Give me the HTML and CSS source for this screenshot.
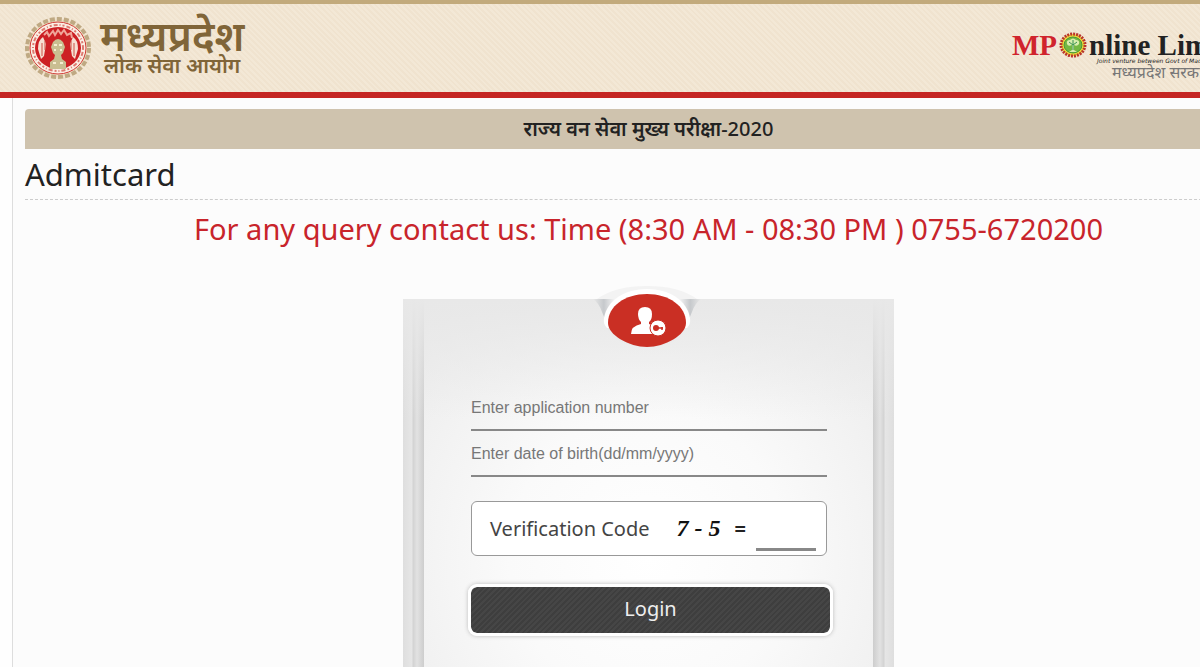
FILE: index.html
```html
<!DOCTYPE html>
<html lang="hi">
<head>
  <meta charset="UTF-8">
  <meta name="viewport" content="width=device-width, initial-scale=1.0">
  <title>Admitcard</title>
  <link rel="stylesheet" href="styles.css">
</head>
<body>
  <div id="wrap">
    <header>
      <a href="#" class="brand">
        <svg class="seal" viewBox="0 0 68 64" aria-hidden="true">
          <ellipse cx="34" cy="32" rx="31" ry="29" fill="#efe0c6" stroke="#bfa983" stroke-width="4" stroke-dasharray="5 2"/>
          <ellipse cx="34" cy="32" rx="28" ry="26" fill="#fbeee4" stroke="#cf3b35" stroke-width="1"/>
          <ellipse cx="34" cy="32" rx="25" ry="23" fill="none" stroke="#dd7a70" stroke-width="2" stroke-dasharray="2 2 4 2 1 2"/>
          <ellipse cx="34" cy="32" rx="23" ry="21" fill="#cd2024"/>
          <path d="M20 19l3-3 2 4 4-5 2 4 3-5 3 4 3-4 3 5 4-2 1 5" fill="none" stroke="#f0a79b" stroke-width="2"/>
          <path d="M14 33q0-9 5-12l3 7-2 12-3 3zM54 33q0-9-5-12l-3 7 2 12 3 3z" fill="#f6dfd2"/>
          <path d="M18 27v13M21 25v9M47 25v9M50 27v13" stroke="#cd5045" stroke-width="1"/>
          <path d="M29 26q5-6 10 0l2 5-2 6-2 2 1 4 4 3v7H26v-7l4-3 1-4-2-2-2-6z" fill="#c9be91"/>
          <path d="M30 29h3M35 29h3M30 34h2M36 34h2M29 47h3M36 47h3" stroke="#f5edd0" stroke-width="2"/>
        </svg>
        <span class="brandText">
          <strong>मध्यप्रदेश</strong>
          <span>लोक सेवा आयोग</span>
        </span>
      </a>
      <a href="#" class="mpo">
        <span class="mpoName">
          <span class="red">MP</span>
          <svg viewBox="0 0 28 26" aria-label="O">
            <ellipse cx="14" cy="13" rx="12" ry="11" fill="#f0dc3a" stroke="#b9342b" stroke-width="3" stroke-dasharray="2 1"/>
            <ellipse cx="14" cy="13" rx="9" ry="8" fill="#73b843" stroke="#46953a" stroke-width="1"/>
            <path d="M8 12q-1-4 3-4 3-3 6 0 4 0 3 4-2 3-5 1v5l3 2h-8l3-2v-5q-4 2-5-1z" fill="#d9edae"/>
            <path d="M10 10l4 3 4-3M14 8v10" stroke="#389253" stroke-width="1" fill="none"/>
          </svg>
          <span>nline Limited</span>
        </span>
        <span class="mpoNote">Joint venture between Govt of Madhya Pradesh</span>
        <span class="mpoHindi">मध्यप्रदेश सरकार</span>
      </a>
    </header>

    <main>
      <h2 class="exam">राज्य वन सेवा मुख्य परीक्षा<span>-2020</span></h2>
      <h1>Admitcard</h1>
      <p class="query">For any query contact us: Time (8:30 AM - 08:30 PM ) 0755-6720200</p>

      <form class="login">
        <!-- user badge over the top edge -->
        <svg class="badge" viewBox="0 0 120 66" aria-hidden="true">
          <defs>
            <linearGradient id="fold" x1="0" y1="0" x2="1" y2="0">
              <stop offset="0" stop-color="#e8e8e8"/>
              <stop offset="0.1" stop-color="#c6c9cc"/>
              <stop offset="0.2" stop-color="#f4f4f4"/>
              <stop offset="0.8" stop-color="#f4f4f4"/>
              <stop offset="0.9" stop-color="#c6c9cc"/>
              <stop offset="1" stop-color="#e8e8e8"/>
            </linearGradient>
          </defs>
          <path d="M10 18Q28 5 60 5t50 13z" fill="#f3f3f3"/>
          <path d="M6 18H114Q108 22 105 31 101 42 94 48H26Q19 42 15 31 12 22 6 18z" fill="url(#fold)"/>
          <path d="M20 47Q16 43 17 37C20 19 38 8 60 8s40 11 43 29q1 6-3 10z" fill="#fff"/>
          <path d="M20 47H100Q90 66 60 66T20 47z" fill="#ebebeb"/>
          <path d="M21 42C21 25 38 13 60 13s39 12 39 29C99 54 78 66 60 66S21 54 21 42z" fill="#ca2f24"/>
          <path d="M58 26q7 0 7 7 0 6-3 8v2q9 2 9 10H44q0-8 10-10v-2q-3-3-3-8 0-7 7-7z" fill="#fff"/>
          <circle cx="71" cy="47" r="8" fill="#fff" stroke="#ca2f24" stroke-width="1"/>
          <circle cx="69" cy="47" r="3" fill="#ca2f24"/>
          <path d="M70 47h6M75 46v3" fill="none" stroke="#ca2f24" stroke-width="1.5"/>
        </svg>

        <input type="text" class="field" placeholder="Enter application number" aria-label="Enter application number">
        <input type="text" class="field" placeholder="Enter date of birth(dd/mm/yyyy)" aria-label="Enter date of birth">
        <div class="code">
          <label for="answer">Verification Code</label>
          <span class="sum">7 - 5</span>
          <b>=</b>
          <input type="text" id="answer">
        </div>
        <button type="submit">Login</button>
      </form>
    </main>
  </div>
</body>
</html>
```

FILE: styles.css
```css
*{margin: 0; padding: 0; box-sizing: border-box;}
body{
  font-family: "Noto Sans", "Open Sans", sans-serif;
  background: #fefefe;
  color: #222;
  overflow: hidden;
}
a{
  color: inherit;
  text-decoration: none;
}
/* the page runs on past the right edge of the window */
#wrap{
  width: 106%;
  min-height: 100vh;
  display: flex;
  flex-direction: column;
}
header{
  height: 98px;
  padding: 0 8px 0 24px;
  display: flex;
  justify-content: space-between;
  align-items: flex-start;
  border-top: 4px solid #c2aa7c;
  border-bottom: 6px solid #c52623;
  background: repeating-linear-gradient(45deg, #f3e8d6 0 2px, #f0e3cf 2px 4px);
}
.brand{
  display: flex;
  gap: 8px;
  padding-top: 12px;
}
.seal{
  width: 68px;
  height: 64px;
}
.brandText{
  display: flex;
  flex-direction: column;
  color: #806538;
  white-space: nowrap;
}
.brandText strong{
  font-size: 41px;
  line-height: 38px;
  font-weight: 600;
}
.brandText span{
  padding-left: 4px;
  font-size: 21px;
  line-height: 22px;
  font-weight: 600;
}
.mpo{
  width: 252px;
  padding-top: 27px;
  display: flex;
  flex-direction: column;
  align-items: flex-start;
  white-space: nowrap;
}
.mpoName{
  display: flex;
  align-items: center;
  gap: 2px;
  height: 27px;
  font: bold 29px/28px "Liberation Serif", serif;
}
.mpoName .red{
  color: #d0242c;
}
.mpoName svg{
  width: 28px;
  height: 28px;
}
.mpoNote{
  padding-left: 85px;
  font: italic 6px/6px "DejaVu Sans", sans-serif;
}
.mpoHindi{
  padding-left: 100px;
  font-size: 16px;
  line-height: 16px;
  color: #777;
}
main{
  flex: 1;
  margin-left: 12px;
  padding: 11px 0 0 12px;
  display: flex;
  flex-direction: column;
  border-left: 1px solid #ddd;
  background: #fcfcfc;
}
.exam{
  border-radius: 4px 4px 0 0;
  background: #cfc3ae;
  text-align: center;
  font-size: 20px;
  line-height: 40px;
  font-weight: 600;
}
.exam span{
  font-weight: 500;
}
h1{
  border-bottom: 1px dashed #ccc;
  font-size: 31px;
  line-height: 50px;
  font-weight: 400;
}
.query{
  text-align: center;
  font-size: 29px;
  line-height: 58px;
  color: #c8242b;
}
.login{
  position: relative;
  flex: 1;
  width: 491px;
  margin: 41px auto 0;
  padding: 88px 61px 31px 68px;
  display: flex;
  flex-direction: column;
  background:
    linear-gradient(#e8e8e8, rgba(232, 232, 232, 0) 120px),
    linear-gradient(90deg, #dedede, #e6e6e6 9px, #d2d2d2 10px, #e2e2e2 14px, #cdcdcd 21px, transparent 21px, transparent 470px, #cdcdcd 470px, #e2e2e2 477px, #d2d2d2 481px, #e6e6e6 482px, #dedede),
    radial-gradient(ellipse at 50% 70%, #fff, #fafafa 40%, #e9e9e9 100%);
}
.badge{
  position: absolute;
  left: 184px;
  top: -18px;
  width: 120px;
  height: 66px;
}
.field{
  width: 356px;
  height: 44px;
  margin-bottom: 2px;
  border: 0;
  border-bottom: 2px solid #888;
  background: none;
  font: 16px "Liberation Sans", sans-serif;
}
.field::placeholder{
  color: #777;
}
.code{
  width: 356px;
  height: 55px;
  margin: 22px 0 28px;
  padding: 0 10px 0 18px;
  display: flex;
  align-items: center;
  border: 1px solid #999;
  border-radius: 6px;
  background: #fff;
}
.code label{
  font-size: 20px;
  color: #444;
}
.sum{
  margin: 0 14px 0 auto;
  font: italic bold 24px "Liberation Serif", serif;
  color: #111;
}
.code b{
  font-size: 20px;
}
#answer{
  width: 60px;
  height: 24px;
  margin: 0 0 4px 10px;
  align-self: flex-end;
  border: 0;
  border-bottom: 3px solid #888;
  background: none;
}
button{
  height: 52px;
  margin: 0 0 0 -3px;
  padding-bottom: 4px;
  border: 3px solid #fff;
  border-radius: 9px;
  background: repeating-linear-gradient(135deg, #3e3e3e 0 2px, #464646 2px 4px) padding-box;
  box-shadow: 0 0 4px #bbb;
  color: #eee;
  font: 20px "Noto Sans", sans-serif;
}
```
